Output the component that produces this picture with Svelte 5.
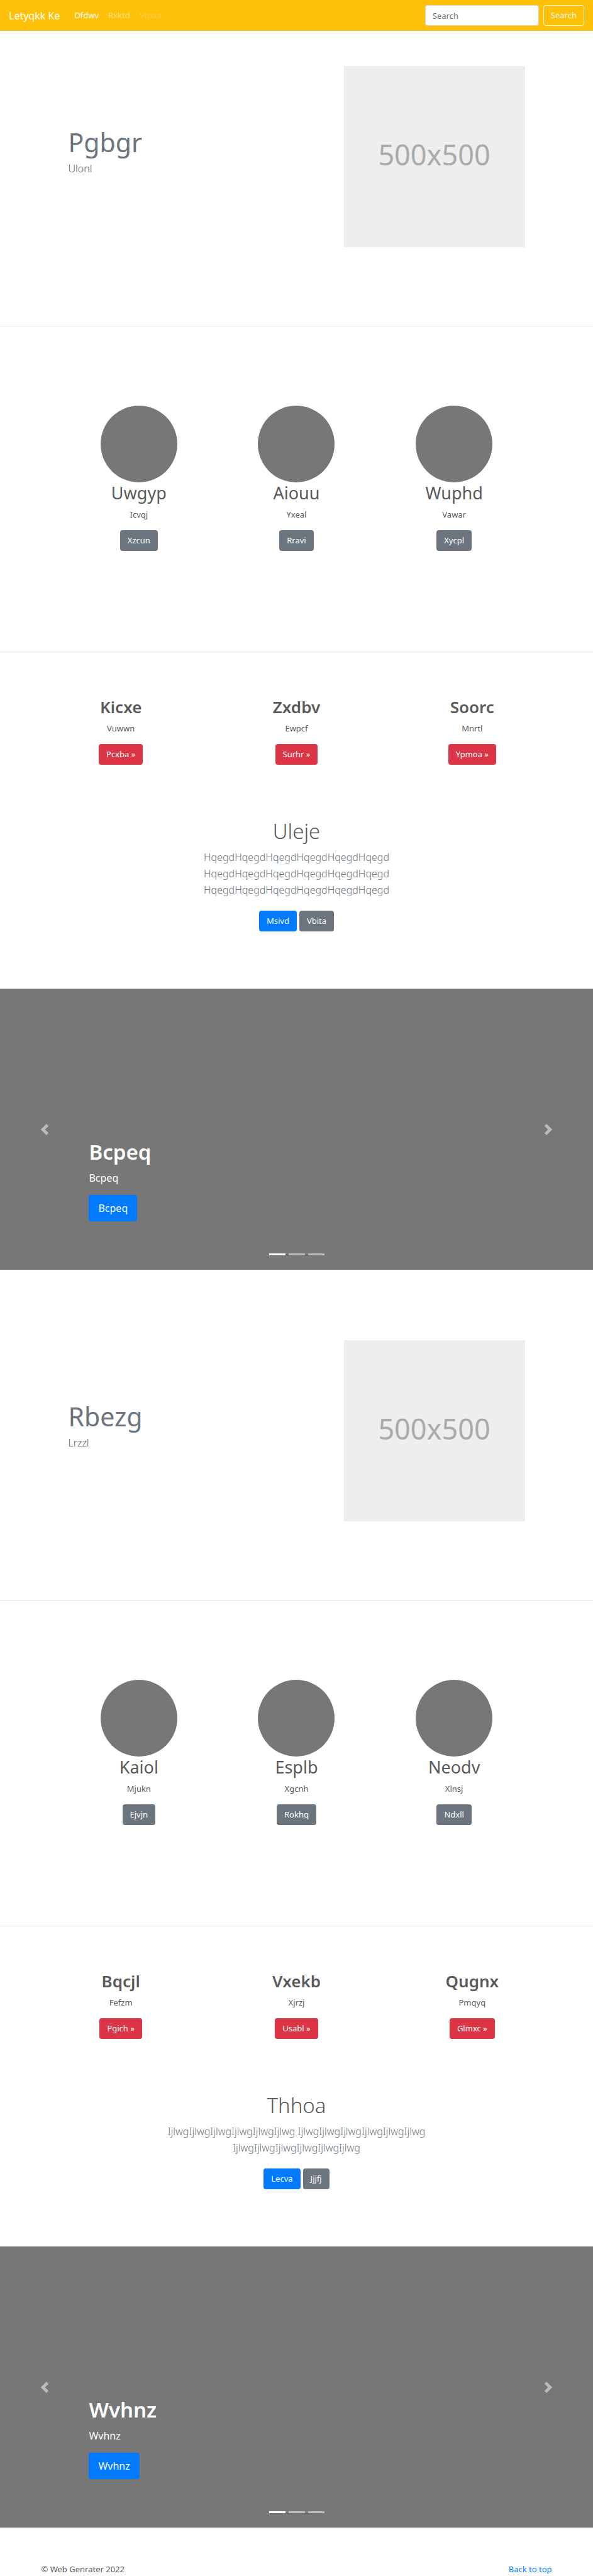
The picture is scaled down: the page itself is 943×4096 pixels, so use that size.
<script>
  const navLinks = [
    { label: 'Dfdwv', state: 'active' },
    { label: 'Rxktd', state: '' },
    { label: 'Vtpaa', state: 'disabled' },
  ];

  const sections = [
    {
      hero: { title: 'Pgbgr', lead: 'Ulonl' },
      people: [
        { title: 'Uwgyp', text: 'Icvqj', action: 'Xzcun' },
        { title: 'Aiouu', text: 'Yxeal', action: 'Rravi' },
        { title: 'Wuphd', text: 'Vawar', action: 'Xycpl' },
      ],
      cards: [
        { title: 'Kicxe', text: 'Vuwwn', action: 'Pcxba' },
        { title: 'Zxdbv', text: 'Ewpcf', action: 'Surhr' },
        { title: 'Soorc', text: 'Mnrtl', action: 'Ypmoa' },
      ],
      album: { title: 'Uleje', word: 'Hqegd', primary: 'Msivd', secondary: 'Vbita' },
      slide: 'Bcpeq',
    },
    {
      hero: { title: 'Rbezg', lead: 'Lrzzl' },
      people: [
        { title: 'Kaiol', text: 'Mjukn', action: 'Ejvjn' },
        { title: 'Esplb', text: 'Xgcnh', action: 'Rokhq' },
        { title: 'Neodv', text: 'Xlnsj', action: 'Ndxll' },
      ],
      cards: [
        { title: 'Bqcjl', text: 'Fefzm', action: 'Pgich' },
        { title: 'Vxekb', text: 'Xjrzj', action: 'Usabl' },
        { title: 'Qugnx', text: 'Pmqyq', action: 'Glmxc' },
      ],
      album: { title: 'Thhoa', word: 'Ijlwg', primary: 'Lecva', secondary: 'Jjjfj' },
      slide: 'Wvhnz',
    },
  ];

  const paragraph = (word) => Array(3).fill(word.repeat(6)).join(' ');
</script>

<header class="navbar">
  <a class="brand" href="#top">Letyqkk Ke</a>
  <nav>
    {#each navLinks as link}
      <a class="nav-link {link.state}" href="#top">{link.label}</a>
    {/each}
  </nav>
  <form class="search" onsubmit={(e) => e.preventDefault()}>
    <input type="search" placeholder="Search" aria-label="Search" />
    <button class="btn outline" type="submit">Search</button>
  </form>
</header>

<main id="top">
  {#each sections as s}
    <section class="hero">
      <div class="hero-text">
        <h2>{s.hero.title}</h2>
        <p class="lead">{s.hero.lead}</p>
      </div>
      <div class="placeholder">500x500</div>
    </section>
    <hr />

    <section class="people">
      {#each s.people as item}
        <article>
          <div class="avatar"></div>
          <h2>{item.title}</h2>
          <p>{item.text}</p>
          <a class="btn secondary" href="#top">{item.action}</a>
        </article>
      {/each}
    </section>
    <hr />

    <section class="cards">
      {#each s.cards as item}
        <article>
          <h2>{item.title}</h2>
          <p>{item.text}</p>
          <a class="btn danger" href="#top">{item.action} »</a>
        </article>
      {/each}
    </section>

    <section class="album">
      <h1>{s.album.title}</h1>
      <p class="lead">{paragraph(s.album.word)}</p>
      <div class="actions">
        <a class="btn primary" href="#top">{s.album.primary}</a>
        <a class="btn secondary" href="#top">{s.album.secondary}</a>
      </div>
    </section>

    <section class="carousel">
      <div class="caption">
        <h1>{s.slide}</h1>
        <p>{s.slide}</p>
        <a class="btn primary large" href="#top">{s.slide}</a>
      </div>
      <button class="control prev" aria-label="Previous">
        <svg viewBox="0 0 8 8" fill="#fff"><path d="M5.25 0l-4 4 4 4 1.5-1.5-2.5-2.5 2.5-2.5-1.5-1.5z" /></svg>
      </button>
      <button class="control next" aria-label="Next">
        <svg viewBox="0 0 8 8" fill="#fff"><path d="M2.75 0l-1.5 1.5 2.5 2.5-2.5 2.5 1.5 1.5 4-4-4-4z" /></svg>
      </button>
      <div class="indicators"><i class="on"></i><i></i><i></i></div>
    </section>
  {/each}
</main>

<footer>
  <p>© Web Genrater 2022</p>
  <a href="#top">Back to top</a>
</footer>

<style>
  :global(body) {
    margin: 0;
    background: #fff;
    color: #5a5a5a;
    font: 400 13px/21px 'Noto Sans', 'Open Sans', sans-serif;
  }
  h1, h2, p { margin: 0; }
  a { text-decoration: none; }
  h1 { font-size: 33px; line-height: 42px; font-weight: 300; }
  h2 { font-size: 27px; line-height: 34px; font-weight: 400; }
  hr { margin: 0; border: 0; height: 1px; background: #e6e6e6; }
  .lead { font-size: 16px; line-height: 26px; font-weight: 300; }

  .navbar {
    display: flex;
    align-items: center;
    box-sizing: border-box;
    min-height: 49px;
    padding: 0 14px;
    background: #ffc107;
  }
  .brand { color: #fff; font-size: 16px; line-height: 26px; margin-right: 23px; }
  nav { display: flex; gap: 15px; flex: 1; }
  .nav-link { color: rgba(255, 255, 255, 0.5); }
  .nav-link.active { color: #fff; }
  .nav-link.disabled { color: rgba(255, 255, 255, 0.25); }
  .search { display: flex; gap: 7px; }
  .search input {
    box-sizing: border-box;
    width: 181px;
    height: 33px;
    padding: 0 11px;
    border: 1px solid #ced4da;
    border-radius: 4px;
    background: #fff;
    color: #495057;
    font: inherit;
  }
  .search input::placeholder { color: #6c757d; opacity: 1; }

  .btn {
    display: inline-block;
    box-sizing: border-box;
    padding: 5px 11px;
    border: 1px solid transparent;
    border-radius: 4px;
    color: #fff;
    font: inherit;
    text-align: center;
  }
  .outline { background: transparent; border-color: #f8f9fa; color: #f8f9fa; }
  .primary { background: #007bff; }
  .secondary { background: #6c757d; }
  .danger { background: #dc3545; }
  .large { padding: 7px 14px; font-size: 16px; line-height: 26px; }

  .hero {
    display: flex;
    align-items: center;
    justify-content: space-between;
    box-sizing: border-box;
    max-width: 838px;
    margin: 0 auto;
    padding: 112px 56px 125px;
  }
  .hero:first-child { padding-top: 56px; }
  .hero-text { padding-bottom: 16px; }
  .hero h2 { font-size: 41px; line-height: 49px; margin-bottom: 4px; color: #6c757d; }
  .placeholder {
    display: grid;
    place-items: center;
    box-sizing: border-box;
    width: 288px;
    aspect-ratio: 1;
    padding-bottom: 6px;
    background: #eee;
    color: #aaa;
    font-size: 45px;
    line-height: 60px;
  }

  .people, .cards {
    display: grid;
    grid-template-columns: repeat(3, 1fr);
    margin: 0 auto;
    text-align: center;
  }
  .people { max-width: 752px; padding: 126px 0 160px; }
  .cards { max-width: 838px; padding: 70px 0 85px; }
  .cards h2 { font-size: 26px; font-weight: 600; }
  article { display: flex; flex-direction: column; align-items: center; }
  article h2 { margin-bottom: 7px; }
  article p { margin-bottom: 14px; }
  .avatar { width: 122px; height: 122px; border-radius: 50%; background: #777; }

  .album { max-width: 559px; margin: 0 auto; padding-bottom: 91px; text-align: center; }
  .album h1 { margin-bottom: 7px; }
  .album .lead { margin-bottom: 20px; color: #6c757d; }
  .actions { display: flex; justify-content: center; gap: 4px; }

  .carousel {
    position: relative;
    display: flex;
    align-items: flex-end;
    box-sizing: border-box;
    min-height: 447px;
    padding: 0 15% 77px;
    background: #777;
    color: #fff;
  }
  .caption h1 { font-weight: 600; margin-bottom: 7px; }
  .caption p { font-size: 16px; line-height: 26px; margin-bottom: 14px; }
  .control {
    position: absolute;
    top: 0;
    bottom: 0;
    width: 15%;
    padding: 0;
    border: 0;
    background: none;
    opacity: 0.5;
  }
  .control svg { width: 18px; height: 18px; vertical-align: middle; }
  .prev { left: 0; }
  .next { right: 0; }
  .indicators {
    position: absolute;
    left: 0;
    right: 0;
    bottom: 23px;
    display: flex;
    justify-content: center;
    gap: 5px;
  }
  .indicators i { width: 26px; height: 3px; background: #fff; opacity: 0.5; }
  .indicators .on { opacity: 1; }

  footer {
    display: flex;
    justify-content: space-between;
    box-sizing: border-box;
    max-width: 838px;
    margin: 0 auto;
    padding: 56px 13px 0;
  }
  footer a { color: #007bff; }
</style>
